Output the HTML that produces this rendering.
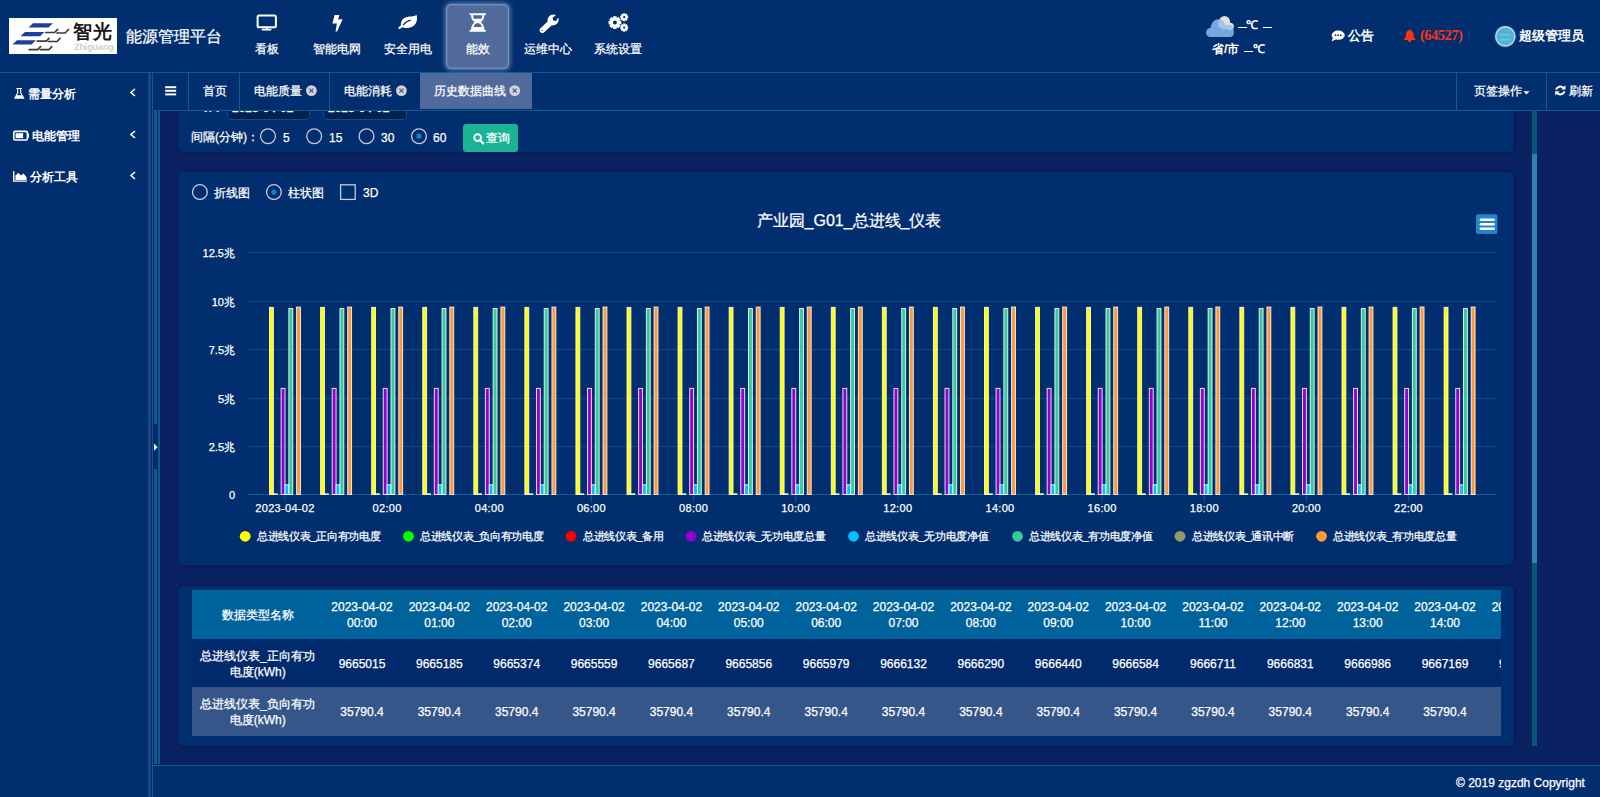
<!DOCTYPE html>
<html><head><meta charset="utf-8">
<style>
*{margin:0;padding:0;box-sizing:border-box}
html,body{width:1600px;height:797px;overflow:hidden}
body{background:#002e6e;color:#fff;font-family:"Liberation Sans",sans-serif;font-size:12px;position:relative}
.a{position:absolute}
.t{position:absolute;white-space:nowrap;line-height:1;-webkit-text-stroke:0.25px currentColor}
.t.nb{-webkit-text-stroke:0}
table{-webkit-text-stroke:0.25px #fff}
svg.s{position:absolute;left:0;top:0;overflow:visible}
</style></head><body>
<div class="a" style="left:0px;top:0px;width:1600px;height:72px;background:#002e6e;"></div>
<div class="a" style="left:0px;top:72px;width:1600px;height:1px;background:#0b5b92;"></div>
<div class="a" style="left:9px;top:18px;width:108px;height:36px;background:#fff;"></div>
<svg class="s" width="1600" height="80" style="width:1600px;height:80px">
<g fill="#1f3f9a">
<polygon points="33,23.3 53,23.3 48.5,27.6 28.5,27.6"/>
<polygon points="25,32 44.5,32 40,36.2 20.5,36.2"/>
<polygon points="17,40.3 36,40.3 31.5,44.6 12.5,44.6"/>
</g>
<g stroke="#3a3a3a" stroke-width="1.7" fill="none" stroke-linecap="round" stroke-linejoin="round">
<polyline points="45.9,32.5 54.6,32.5 57.6,29.3"/><polyline points="56.9,33 65.1,33 68.5,29.5"/>
<polyline points="37.3,41.1 46.3,41.1 49,38.3"/><polyline points="48.6,41.5 57.2,41.5 60.1,38.3"/>
<polyline points="29.2,49.6 37.7,49.6 40.5,46.6"/><polyline points="40.3,49.6 49,49.6 51.8,46.6"/>
</g>
</svg>
<div class="t nb" style="left:73px;top:22px;font-size:19px;font-weight:bold;color:#1a1a1a;letter-spacing:1px">智光</div>
<div class="t nb" style="left:74px;top:42.5px;font-size:9px;font-weight:bold;color:#cfcfcf;letter-spacing:-0.1px">Zhiguang</div>
<div class="t" style="left:126px;top:29px;font-size:16px">能源管理平台</div>
<div class="a" style="left:446px;top:4px;width:63px;height:65px;background:#4f6a9b;border-radius:5px;box-shadow:0 0 5px 1px rgba(190,205,235,.55),inset 0 0 2px 1px rgba(200,215,240,.45)"></div>
<div class="t" style="left:255px;top:43px;font-size:12px">看板</div>
<div class="t" style="left:313px;top:43px;font-size:12px">智能电网</div>
<div class="t" style="left:384px;top:43px;font-size:12px">安全用电</div>
<div class="t" style="left:466px;top:43px;font-size:12px">能效</div>
<div class="t" style="left:524px;top:43px;font-size:12px">运维中心</div>
<div class="t" style="left:594px;top:43px;font-size:12px">系统设置</div>
<svg class="s" width="1600" height="80" style="width:1600px;height:80px">
<rect x="257.6" y="15.4" width="18.3" height="11.9" rx="1.6" ry="1.6" fill="none" stroke="#fff" stroke-width="2"/>
<rect x="266" y="27.5" width="2" height="2" fill="#fff"/>
<rect x="261.6" y="28.8" width="10" height="1.6" rx="0.8" fill="#fff"/>
<polygon fill="#fff" points="334.6,15.1 339.4,15.1 338.1,19.4 342.6,19.3 337.1,31.6 335.5,31.6 336.9,23.6 332.4,23.6"/>
<path fill="#fff" d="M416.6,15 C417.8,19 417,24.5 411.5,27 C408,28.6 404.5,28 402.5,27.2 L400,28.8 C399,29.2 397.8,28.4 398.4,27.6 L401,25.2 C400.5,22 402,18.6 405.5,17.4 C409,16.2 414,16.8 416.6,15 Z"/>
<path fill="none" stroke="#002e6e" stroke-width="1.1" d="M403,25.2 C405,22.5 408,20.8 411,20"/>
<g fill="#fff">
<path fill-rule="evenodd" d="M469.5,13.2 H485.9 V15.1 H484.4 C484.4,18.5 483,20.6 480.9,22.35 C483,24.1 484.4,26.5 484.4,30 H485.9 V31.8 H469.5 V30 H471 C471,26.5 472.4,24.1 474.5,22.35 C472.4,20.6 471,18.5 471,15.1 H469.5 Z M472.9,15.3 H482.4 L481.7,18.7 H473.7 Z M477.7,23.1 C475.5,23.4 473.9,25 473.5,26.9 H482 C481.5,25 479.9,23.4 477.7,23.1 Z"/>
</g>
<path fill="#fff" d="M540.2,28.4 L547.6,21.4 C547,18 549.6,14.4 553.6,14.4 C554.6,14.4 555.4,14.6 556,15 L552.6,17.8 L553.2,20.4 L555.8,21 L558.2,17.8 C558.6,18.6 558.8,19.4 558.6,20.6 C558.2,23.8 555,26 551.6,25.4 L544.2,32.2 C543,33.4 541.4,33.2 540.4,32.2 C539.4,31.2 539.2,29.6 540.2,28.4 Z"/>
<circle cx="542" cy="30.4" r="0.7" fill="#002e6e"/>
<path fill="#fff" fill-rule="evenodd" d="M619.52,20.69 L619.59,20.87 L621.25,20.81 L621.25,24.39 L619.59,24.33 L619.52,24.51 L619.44,24.69 L620.66,25.82 L618.12,28.36 L616.99,27.14 L616.81,27.22 L616.63,27.29 L616.69,28.95 L613.11,28.95 L613.17,27.29 L612.99,27.22 L612.81,27.14 L611.68,28.36 L609.14,25.82 L610.36,24.69 L610.28,24.51 L610.21,24.33 L608.55,24.39 L608.55,20.81 L610.21,20.87 L610.28,20.69 L610.36,20.51 L609.14,19.38 L611.68,16.84 L612.81,18.06 L612.99,17.98 L613.17,17.91 L613.11,16.25 L616.69,16.25 L616.63,17.91 L616.81,17.98 L616.99,18.06 L618.12,16.84 L620.66,19.38 L619.44,20.51 Z M616.90,22.60 A2.0,2.0 0 1,0 612.90,22.60 A2.0,2.0 0 1,0 616.90,22.60 Z"/><path fill="#fff" fill-rule="evenodd" d="M627.06,16.01 L627.11,16.13 L628.24,16.06 L628.24,18.34 L627.11,18.27 L627.06,18.39 L627.02,18.50 L627.86,19.25 L626.25,20.86 L625.50,20.02 L625.39,20.06 L625.27,20.11 L625.34,21.24 L623.06,21.24 L623.13,20.11 L623.01,20.06 L622.90,20.02 L622.15,20.86 L620.54,19.25 L621.38,18.50 L621.34,18.39 L621.29,18.27 L620.16,18.34 L620.16,16.06 L621.29,16.13 L621.34,16.01 L621.38,15.90 L620.54,15.15 L622.15,13.54 L622.90,14.38 L623.01,14.34 L623.13,14.29 L623.06,13.16 L625.34,13.16 L625.27,14.29 L625.39,14.34 L625.50,14.38 L626.25,13.54 L627.86,15.15 L627.02,15.90 Z M625.30,17.20 A1.1,1.1 0 1,0 623.10,17.20 A1.1,1.1 0 1,0 625.30,17.20 Z"/><path fill="#fff" fill-rule="evenodd" d="M627.06,26.41 L627.11,26.53 L628.24,26.46 L628.24,28.74 L627.11,28.67 L627.06,28.79 L627.02,28.90 L627.86,29.65 L626.25,31.26 L625.50,30.42 L625.39,30.46 L625.27,30.51 L625.34,31.64 L623.06,31.64 L623.13,30.51 L623.01,30.46 L622.90,30.42 L622.15,31.26 L620.54,29.65 L621.38,28.90 L621.34,28.79 L621.29,28.67 L620.16,28.74 L620.16,26.46 L621.29,26.53 L621.34,26.41 L621.38,26.30 L620.54,25.55 L622.15,23.94 L622.90,24.78 L623.01,24.74 L623.13,24.69 L623.06,23.56 L625.34,23.56 L625.27,24.69 L625.39,24.74 L625.50,24.78 L626.25,23.94 L627.86,25.55 L627.02,26.30 Z M625.30,27.60 A1.1,1.1 0 1,0 623.10,27.60 A1.1,1.1 0 1,0 625.30,27.60 Z"/>
</svg>
<svg class="s" width="1600" height="80" style="width:1600px;height:80px">
<defs>
<clipPath id="cfront"><path d="M1210.5,36.9 C1207.8,36.9 1206,34.8 1206,32.4 C1206,29.8 1208,27.9 1210.6,27.9 C1211.2,23 1214.2,19.2 1218,19.2 C1221.8,19.2 1224.4,22 1225,25.2 L1229.8,25.4 C1232.2,25.6 1233.8,27.8 1233.8,31.2 L1233.8,33.2 C1233.8,35.4 1232.2,36.9 1230,36.9 Z"/></clipPath>
</defs>
<g fill="#e0e0e0"><circle cx="1224.5" cy="21.6" r="5.6"/><circle cx="1230.2" cy="26.4" r="3.6"/><rect x="1224.5" y="22.8" width="5.7" height="7"/></g>
<path fill="#76a6dc" d="M1210.5,36.9 C1207.8,36.9 1206,34.8 1206,32.4 C1206,29.8 1208,27.9 1210.6,27.9 C1211.2,23 1214.2,19.2 1218,19.2 C1221.8,19.2 1224.4,22 1225,25.2 L1229.8,25.4 C1232.2,25.6 1233.8,27.8 1233.8,31.2 L1233.8,33.2 C1233.8,35.4 1232.2,36.9 1230,36.9 Z"/>
<g clip-path="url(#cfront)" fill="#9dc6ee"><circle cx="1223.4" cy="23.6" r="5.6"/><circle cx="1230.2" cy="26.4" r="3.6"/><rect x="1224" y="24" width="6.2" height="5.2"/></g>
</svg>
<div class="t nb" style="left:1246px;top:19px;font-size:12px;font-weight:bold">℃</div>
<div class="t nb" style="left:1212px;top:43px;font-size:12px;font-weight:bold">省/市</div>
<div class="t nb" style="left:1252.5px;top:43px;font-size:12px;font-weight:bold">℃</div>
<div class="a" style="left:1238.2px;top:26.8px;width:8.6px;height:1.4px;background:#fff;"></div>
<div class="a" style="left:1262.7px;top:26.8px;width:9px;height:1.4px;background:#fff;"></div>
<div class="a" style="left:1244px;top:50.6px;width:9px;height:1.4px;background:#fff;"></div>
<svg class="s" width="1600" height="80" style="width:1600px;height:80px">
<ellipse cx="1338.2" cy="35.2" rx="6.5" ry="4.6" fill="#fff"/>
<polygon points="1333,37.5 1331.5,41.5 1337,38.8" fill="#fff"/>
<circle cx="1335.5" cy="35.2" r="0.9" fill="#002e6e"/><circle cx="1338.2" cy="35.2" r="0.9" fill="#002e6e"/><circle cx="1340.9" cy="35.2" r="0.9" fill="#002e6e"/>
<path fill="#ff3311" d="M1409.7,28.8 L1410.5,30.2 C1412.6,30.8 1413.5,32.6 1413.5,34.6 C1413.5,37.4 1414.6,39 1416,40.1 L1403.4,40.1 C1404.8,39 1405.9,37.4 1405.9,34.6 C1405.9,32.6 1406.8,30.8 1408.9,30.2 Z"/>
<path fill="#ff3311" d="M1408,40 L1411.4,40 C1411.4,41.2 1410.6,41.9 1409.7,41.9 C1408.8,41.9 1408,41.2 1408,40 Z"/>
<circle cx="1505.3" cy="36.4" r="11.4" fill="#104c9c" opacity="0.8"/>
<circle cx="1505.3" cy="36.4" r="8.9" fill="#4bb5d6"/>
<circle cx="1505.3" cy="36.4" r="9.5" fill="none" stroke="#c8d2de" stroke-width="1.6"/>
<rect x="1500" y="34" width="10.6" height="1.8" fill="#8fd0e4" opacity="0.55"/>
<rect x="1500" y="38.8" width="10.6" height="1.8" fill="#8fd0e4" opacity="0.55"/>
</svg>
<div class="t nb" style="left:1348px;top:29px;font-size:13px;font-weight:bold">公告</div>
<div class="t nb" style="left:1420px;top:28px;font-size:14.5px;font-weight:bold;color:#ff3311;font-family:Liberation Serif,serif;letter-spacing:-0.5px">(64527)</div>
<div class="t nb" style="left:1519px;top:29px;font-size:13px;font-weight:bold">超级管理员</div>
<div class="a" style="left:148px;top:73px;width:3px;height:724px;background:#1b4584;"></div>
<div class="a" style="left:152px;top:73px;width:1px;height:724px;background:#0b5b92;"></div>
<div class="t nb" style="left:28px;top:88px;font-size:12px;font-weight:bold">需量分析</div>
<div class="t nb" style="left:32px;top:130px;font-size:12px;font-weight:bold">电能管理</div>
<div class="t nb" style="left:30px;top:171px;font-size:12px;font-weight:bold">分析工具</div>
<svg class="s" width="200" height="200" style="width:200px;height:200px">
<path fill="#fff" d="M16.4,88 L22,88 L22,89 L21.2,89 L21.2,92.6 L24.6,98.8 L14,98.8 L17.2,92.6 L17.2,89 L16.4,89 Z"/>
<path fill="#002e6e" d="M18.3,89 L20.1,89 L20.1,92.9 L21.4,95.2 L17,95.2 L18.3,92.9 Z"/>
<rect x="13.8" y="131.4" width="13.6" height="8.6" rx="1.5" fill="none" stroke="#fff" stroke-width="1.6"/>
<rect x="27.4" y="133.6" width="1.6" height="4.2" fill="#fff"/>
<rect x="15.6" y="133.2" width="7.5" height="5" fill="#fff"/>
<path fill="#fff" d="M13,171.2 L14.4,171.2 L14.4,180.4 L27,180.4 L27,181.8 L13,181.8 Z"/>
<path fill="#fff" d="M15.4,180 L15.4,175.5 L18.5,172.8 L21,175.5 L23.5,173.6 L26.6,177.2 L26.6,180 Z"/>
<g fill="none" stroke="#fff" stroke-width="1.6"><polyline points="135,89 131,92.5 135,96"/><polyline points="135,131 131,134.5 135,138"/><polyline points="135,172 131,175.5 135,179"/></g>
</svg>
<div class="a" style="left:153px;top:110px;width:1447px;height:1px;background:#0b5b92;"></div>
<div class="a" style="left:188px;top:73px;width:1px;height:37px;background:#0b5b92;"></div>
<div class="a" style="left:239px;top:73px;width:1px;height:37px;background:#0b5b92;"></div>
<div class="a" style="left:329px;top:73px;width:1px;height:37px;background:#0b5b92;"></div>
<div class="a" style="left:1456px;top:73px;width:1px;height:37px;background:#0b5b92;"></div>
<div class="a" style="left:1546px;top:73px;width:1px;height:37px;background:#0b5b92;"></div>
<div class="a" style="left:420px;top:73px;width:112px;height:36px;background:#4f6a9b;"></div>
<div class="t" style="left:203px;top:85px;font-size:12px">首页</div>
<div class="t" style="left:254px;top:85px;font-size:12px">电能质量</div>
<div class="t" style="left:344px;top:85px;font-size:12px">电能消耗</div>
<div class="t" style="left:434px;top:85px;font-size:12px">历史数据曲线</div>
<div class="t" style="left:1474px;top:85px;font-size:12px">页签操作</div>
<div class="t" style="left:1569px;top:85px;font-size:12px">刷新</div>
<svg class="s" width="1600" height="120" style="width:1600px;height:120px">
<rect x="165.2" y="86.2" width="11" height="2" fill="#fff"/>
<rect x="165.2" y="89.8" width="11" height="2" fill="#fff"/>
<rect x="165.2" y="93.4" width="11" height="2" fill="#fff"/>
<circle cx="311.4" cy="90.6" r="5.4" fill="#d2d4da"/><g stroke="#4a5a7a" stroke-width="1.3"><line x1="309.4" y1="88.6" x2="313.4" y2="92.6"/><line x1="313.4" y1="88.6" x2="309.4" y2="92.6"/></g><circle cx="401.4" cy="90.6" r="5.4" fill="#d2d4da"/><g stroke="#4a5a7a" stroke-width="1.3"><line x1="399.4" y1="88.6" x2="403.4" y2="92.6"/><line x1="403.4" y1="88.6" x2="399.4" y2="92.6"/></g><circle cx="514.7" cy="90.6" r="5.4" fill="#d2d4da"/><g stroke="#4a5a7a" stroke-width="1.3"><line x1="512.7" y1="88.6" x2="516.7" y2="92.6"/><line x1="516.7" y1="88.6" x2="512.7" y2="92.6"/></g>
<polygon points="1523.5,91.2 1529.5,91.2 1526.5,94.5" fill="#fff"/>
<path fill="none" stroke="#fff" stroke-width="2" d="M1563.6,88 A4.6,4.6 0 0 0 1556,89.6 M1557,93 A4.6,4.6 0 0 0 1564.6,91.4"/>
<polygon fill="#fff" points="1565.5,85.2 1565.5,89.6 1561.2,89.6"/>
<polygon fill="#fff" points="1555.2,95.6 1555.2,91.2 1559.5,91.2"/>
</svg>
<div class="a" style="left:153px;top:111px;width:1447px;height:654px;background:#0a2162;"></div>
<div class="a" style="left:154px;top:111px;width:3.4px;height:313px;background:#0a5a93;"></div>
<div class="a" style="left:154px;top:424px;width:3.4px;height:45px;background:#012c6c;"></div>
<div class="a" style="left:154px;top:469px;width:3.4px;height:295px;background:#0a5a93;"></div>
<div class="a" style="left:158px;top:111px;width:2px;height:653px;background:#0a5a93;"></div>
<svg class="s" width="200" height="797" style="width:200px;height:797px"><polygon points="154,443.6 154,450.8 157.6,447.2" fill="#fff"/></svg>
<div class="a" style="left:1532px;top:111px;width:5px;height:635px;background:#0a5478;"></div>
<div class="a" style="left:1532px;top:154px;width:5px;height:409px;background:#3381b3;"></div>
<div class="a" style="left:153px;top:111px;width:1380px;height:45px;overflow:hidden">
<div class="a" style="left:25px;top:-40px;width:1336px;height:81px;background:#002e6e;border-radius:5px;box-shadow:0 0 3px rgba(0,0,20,.35)">
<div class="a" style="left:49px;top:0px;width:83px;height:49px;background:#03214f;border:1px solid #0d4d8a;border-radius:4px"></div>
<div class="a" style="left:145px;top:0px;width:84px;height:49px;background:#03214f;border:1px solid #0d4d8a;border-radius:4px"></div>
<div class="t" style="left:54px;top:31px;font-size:12px;font-weight:bold">2023-04-02</div>
<div class="t" style="left:150px;top:31px;font-size:12px;font-weight:bold">2023-04-02</div>
<div class="t" style="left:20px;top:30px;font-size:11px;font-weight:bold">时间:</div>
</div></div>
<div class="t" style="left:191px;top:131px;font-size:12px">间隔(分钟)：</div>
<div class="t" style="left:283px;top:132px;font-size:12px">5</div>
<div class="t" style="left:329px;top:132px;font-size:12px">15</div>
<div class="t" style="left:381px;top:132px;font-size:12px">30</div>
<div class="t" style="left:433px;top:132px;font-size:12px">60</div>
<div class="a" style="left:463px;top:124px;width:55px;height:28px;background:#1ab394;border-radius:3px"></div>
<svg class="s" width="600" height="220" style="width:600px;height:220px">
<circle cx="477.6" cy="137.6" r="3.4" fill="none" stroke="#fff" stroke-width="1.9"/>
<line x1="480" y1="140" x2="483.2" y2="143.4" stroke="#fff" stroke-width="2.2" stroke-linecap="round"/>
</svg>
<div class="t" style="left:486px;top:132px;font-size:12px">查询</div>
<div class="a" style="left:178px;top:172px;width:1336px;height:393px;background:#002e6e;border-radius:5px;box-shadow:0 0 3px rgba(0,0,20,.35)"></div>
<svg class="s" width="600" height="220" style="width:600px;height:220px">
<g fill="none" stroke="#c8ccd6" stroke-width="1.3">
<circle cx="268" cy="136.2" r="7.4"/><circle cx="314.2" cy="136.2" r="7.4"/><circle cx="366.5" cy="136.2" r="7.4"/><circle cx="419" cy="136.2" r="7.4"/>
<circle cx="199.9" cy="192.1" r="7.4"/><circle cx="273.9" cy="192.1" r="7.4"/>
<rect x="340.6" y="184.8" width="14.6" height="14.6"/>
</g>
<circle cx="419" cy="136.2" r="2.6" fill="#1a7fbf"/>
<circle cx="273.9" cy="192.1" r="2.6" fill="#1a7fbf"/>
</svg>
<div class="t" style="left:214px;top:187px;font-size:12px">折线图</div>
<div class="t" style="left:288px;top:187px;font-size:12px">柱状图</div>
<div class="t" style="left:363px;top:187px;font-size:12px">3D</div>
<svg class="s" width="1600" height="600" style="width:1600px;height:600px">
<rect x="248" y="252" width="1249" height="1" fill="#0c4a86"/>
<rect x="248" y="301" width="1249" height="1" fill="#0c4a86"/>
<rect x="248" y="349" width="1249" height="1" fill="#0c4a86"/>
<rect x="248" y="398" width="1249" height="1" fill="#0c4a86"/>
<rect x="248" y="446" width="1249" height="1" fill="#0c4a86"/>
<rect x="248" y="494" width="1249" height="1" fill="#0e5a8c"/>
<rect x="284.50" y="495" width="1" height="7" fill="#0e5a8c"/>
<rect x="386.64" y="495" width="1" height="7" fill="#0e5a8c"/>
<rect x="488.78" y="495" width="1" height="7" fill="#0e5a8c"/>
<rect x="590.92" y="495" width="1" height="7" fill="#0e5a8c"/>
<rect x="693.06" y="495" width="1" height="7" fill="#0e5a8c"/>
<rect x="795.20" y="495" width="1" height="7" fill="#0e5a8c"/>
<rect x="897.34" y="495" width="1" height="7" fill="#0e5a8c"/>
<rect x="999.48" y="495" width="1" height="7" fill="#0e5a8c"/>
<rect x="1101.62" y="495" width="1" height="7" fill="#0e5a8c"/>
<rect x="1203.76" y="495" width="1" height="7" fill="#0e5a8c"/>
<rect x="1305.90" y="495" width="1" height="7" fill="#0e5a8c"/>
<rect x="1408.04" y="495" width="1" height="7" fill="#0e5a8c"/>
<rect x="269.52" y="307.39" width="3.87" height="187.11" fill="#ffff00" stroke="rgba(255,255,255,0.85)" stroke-width="1"/>
<rect x="273.39" y="493.81" width="3.87" height="0.69" fill="#00ff00" stroke="rgba(255,255,255,0.85)" stroke-width="1"/>
<rect x="281.13" y="388.41" width="3.87" height="106.09" fill="#9400d3" stroke="rgba(255,255,255,0.85)" stroke-width="1"/>
<rect x="285.00" y="484.82" width="3.87" height="9.68" fill="#00bfff" stroke="rgba(255,255,255,0.85)" stroke-width="1"/>
<rect x="288.87" y="308.51" width="3.87" height="185.99" fill="#33cc99" stroke="rgba(255,255,255,0.85)" stroke-width="1"/>
<rect x="296.61" y="307.10" width="3.87" height="187.40" fill="#ff9933" stroke="rgba(255,255,255,0.85)" stroke-width="1"/>
<rect x="320.59" y="307.38" width="3.87" height="187.12" fill="#ffff00" stroke="rgba(255,255,255,0.85)" stroke-width="1"/>
<rect x="324.46" y="493.81" width="3.87" height="0.69" fill="#00ff00" stroke="rgba(255,255,255,0.85)" stroke-width="1"/>
<rect x="332.20" y="388.41" width="3.87" height="106.09" fill="#9400d3" stroke="rgba(255,255,255,0.85)" stroke-width="1"/>
<rect x="336.07" y="484.82" width="3.87" height="9.68" fill="#00bfff" stroke="rgba(255,255,255,0.85)" stroke-width="1"/>
<rect x="339.94" y="308.51" width="3.87" height="185.99" fill="#33cc99" stroke="rgba(255,255,255,0.85)" stroke-width="1"/>
<rect x="347.68" y="307.09" width="3.87" height="187.41" fill="#ff9933" stroke="rgba(255,255,255,0.85)" stroke-width="1"/>
<rect x="371.66" y="307.38" width="3.87" height="187.12" fill="#ffff00" stroke="rgba(255,255,255,0.85)" stroke-width="1"/>
<rect x="375.53" y="493.81" width="3.87" height="0.69" fill="#00ff00" stroke="rgba(255,255,255,0.85)" stroke-width="1"/>
<rect x="383.27" y="388.41" width="3.87" height="106.09" fill="#9400d3" stroke="rgba(255,255,255,0.85)" stroke-width="1"/>
<rect x="387.14" y="484.82" width="3.87" height="9.68" fill="#00bfff" stroke="rgba(255,255,255,0.85)" stroke-width="1"/>
<rect x="391.01" y="308.50" width="3.87" height="186.00" fill="#33cc99" stroke="rgba(255,255,255,0.85)" stroke-width="1"/>
<rect x="398.75" y="307.09" width="3.87" height="187.41" fill="#ff9933" stroke="rgba(255,255,255,0.85)" stroke-width="1"/>
<rect x="422.73" y="307.37" width="3.87" height="187.13" fill="#ffff00" stroke="rgba(255,255,255,0.85)" stroke-width="1"/>
<rect x="426.60" y="493.81" width="3.87" height="0.69" fill="#00ff00" stroke="rgba(255,255,255,0.85)" stroke-width="1"/>
<rect x="434.34" y="388.41" width="3.87" height="106.09" fill="#9400d3" stroke="rgba(255,255,255,0.85)" stroke-width="1"/>
<rect x="438.21" y="484.82" width="3.87" height="9.68" fill="#00bfff" stroke="rgba(255,255,255,0.85)" stroke-width="1"/>
<rect x="442.08" y="308.50" width="3.87" height="186.00" fill="#33cc99" stroke="rgba(255,255,255,0.85)" stroke-width="1"/>
<rect x="449.82" y="307.08" width="3.87" height="187.42" fill="#ff9933" stroke="rgba(255,255,255,0.85)" stroke-width="1"/>
<rect x="473.80" y="307.37" width="3.87" height="187.13" fill="#ffff00" stroke="rgba(255,255,255,0.85)" stroke-width="1"/>
<rect x="477.67" y="493.81" width="3.87" height="0.69" fill="#00ff00" stroke="rgba(255,255,255,0.85)" stroke-width="1"/>
<rect x="485.41" y="388.41" width="3.87" height="106.09" fill="#9400d3" stroke="rgba(255,255,255,0.85)" stroke-width="1"/>
<rect x="489.28" y="484.82" width="3.87" height="9.68" fill="#00bfff" stroke="rgba(255,255,255,0.85)" stroke-width="1"/>
<rect x="493.15" y="308.50" width="3.87" height="186.00" fill="#33cc99" stroke="rgba(255,255,255,0.85)" stroke-width="1"/>
<rect x="500.89" y="307.08" width="3.87" height="187.42" fill="#ff9933" stroke="rgba(255,255,255,0.85)" stroke-width="1"/>
<rect x="524.87" y="307.37" width="3.87" height="187.13" fill="#ffff00" stroke="rgba(255,255,255,0.85)" stroke-width="1"/>
<rect x="528.74" y="493.81" width="3.87" height="0.69" fill="#00ff00" stroke="rgba(255,255,255,0.85)" stroke-width="1"/>
<rect x="536.48" y="388.41" width="3.87" height="106.09" fill="#9400d3" stroke="rgba(255,255,255,0.85)" stroke-width="1"/>
<rect x="540.35" y="484.82" width="3.87" height="9.68" fill="#00bfff" stroke="rgba(255,255,255,0.85)" stroke-width="1"/>
<rect x="544.22" y="308.49" width="3.87" height="186.01" fill="#33cc99" stroke="rgba(255,255,255,0.85)" stroke-width="1"/>
<rect x="551.96" y="307.08" width="3.87" height="187.42" fill="#ff9933" stroke="rgba(255,255,255,0.85)" stroke-width="1"/>
<rect x="575.94" y="307.37" width="3.87" height="187.13" fill="#ffff00" stroke="rgba(255,255,255,0.85)" stroke-width="1"/>
<rect x="579.81" y="493.81" width="3.87" height="0.69" fill="#00ff00" stroke="rgba(255,255,255,0.85)" stroke-width="1"/>
<rect x="587.55" y="388.41" width="3.87" height="106.09" fill="#9400d3" stroke="rgba(255,255,255,0.85)" stroke-width="1"/>
<rect x="591.42" y="484.82" width="3.87" height="9.68" fill="#00bfff" stroke="rgba(255,255,255,0.85)" stroke-width="1"/>
<rect x="595.29" y="308.49" width="3.87" height="186.01" fill="#33cc99" stroke="rgba(255,255,255,0.85)" stroke-width="1"/>
<rect x="603.03" y="307.08" width="3.87" height="187.42" fill="#ff9933" stroke="rgba(255,255,255,0.85)" stroke-width="1"/>
<rect x="627.01" y="307.36" width="3.87" height="187.14" fill="#ffff00" stroke="rgba(255,255,255,0.85)" stroke-width="1"/>
<rect x="630.88" y="493.81" width="3.87" height="0.69" fill="#00ff00" stroke="rgba(255,255,255,0.85)" stroke-width="1"/>
<rect x="638.62" y="388.41" width="3.87" height="106.09" fill="#9400d3" stroke="rgba(255,255,255,0.85)" stroke-width="1"/>
<rect x="642.49" y="484.82" width="3.87" height="9.68" fill="#00bfff" stroke="rgba(255,255,255,0.85)" stroke-width="1"/>
<rect x="646.36" y="308.49" width="3.87" height="186.01" fill="#33cc99" stroke="rgba(255,255,255,0.85)" stroke-width="1"/>
<rect x="654.10" y="307.07" width="3.87" height="187.43" fill="#ff9933" stroke="rgba(255,255,255,0.85)" stroke-width="1"/>
<rect x="678.08" y="307.36" width="3.87" height="187.14" fill="#ffff00" stroke="rgba(255,255,255,0.85)" stroke-width="1"/>
<rect x="681.95" y="493.81" width="3.87" height="0.69" fill="#00ff00" stroke="rgba(255,255,255,0.85)" stroke-width="1"/>
<rect x="689.69" y="388.41" width="3.87" height="106.09" fill="#9400d3" stroke="rgba(255,255,255,0.85)" stroke-width="1"/>
<rect x="693.56" y="484.82" width="3.87" height="9.68" fill="#00bfff" stroke="rgba(255,255,255,0.85)" stroke-width="1"/>
<rect x="697.43" y="308.48" width="3.87" height="186.02" fill="#33cc99" stroke="rgba(255,255,255,0.85)" stroke-width="1"/>
<rect x="705.17" y="307.07" width="3.87" height="187.43" fill="#ff9933" stroke="rgba(255,255,255,0.85)" stroke-width="1"/>
<rect x="729.15" y="307.36" width="3.87" height="187.14" fill="#ffff00" stroke="rgba(255,255,255,0.85)" stroke-width="1"/>
<rect x="733.02" y="493.81" width="3.87" height="0.69" fill="#00ff00" stroke="rgba(255,255,255,0.85)" stroke-width="1"/>
<rect x="740.76" y="388.41" width="3.87" height="106.09" fill="#9400d3" stroke="rgba(255,255,255,0.85)" stroke-width="1"/>
<rect x="744.63" y="484.82" width="3.87" height="9.68" fill="#00bfff" stroke="rgba(255,255,255,0.85)" stroke-width="1"/>
<rect x="748.50" y="308.48" width="3.87" height="186.02" fill="#33cc99" stroke="rgba(255,255,255,0.85)" stroke-width="1"/>
<rect x="756.24" y="307.07" width="3.87" height="187.43" fill="#ff9933" stroke="rgba(255,255,255,0.85)" stroke-width="1"/>
<rect x="780.22" y="307.35" width="3.87" height="187.15" fill="#ffff00" stroke="rgba(255,255,255,0.85)" stroke-width="1"/>
<rect x="784.09" y="493.81" width="3.87" height="0.69" fill="#00ff00" stroke="rgba(255,255,255,0.85)" stroke-width="1"/>
<rect x="791.83" y="388.41" width="3.87" height="106.09" fill="#9400d3" stroke="rgba(255,255,255,0.85)" stroke-width="1"/>
<rect x="795.70" y="484.82" width="3.87" height="9.68" fill="#00bfff" stroke="rgba(255,255,255,0.85)" stroke-width="1"/>
<rect x="799.57" y="308.48" width="3.87" height="186.02" fill="#33cc99" stroke="rgba(255,255,255,0.85)" stroke-width="1"/>
<rect x="807.31" y="307.06" width="3.87" height="187.44" fill="#ff9933" stroke="rgba(255,255,255,0.85)" stroke-width="1"/>
<rect x="831.29" y="307.35" width="3.87" height="187.15" fill="#ffff00" stroke="rgba(255,255,255,0.85)" stroke-width="1"/>
<rect x="835.16" y="493.81" width="3.87" height="0.69" fill="#00ff00" stroke="rgba(255,255,255,0.85)" stroke-width="1"/>
<rect x="842.90" y="388.41" width="3.87" height="106.09" fill="#9400d3" stroke="rgba(255,255,255,0.85)" stroke-width="1"/>
<rect x="846.77" y="484.82" width="3.87" height="9.68" fill="#00bfff" stroke="rgba(255,255,255,0.85)" stroke-width="1"/>
<rect x="850.64" y="308.48" width="3.87" height="186.02" fill="#33cc99" stroke="rgba(255,255,255,0.85)" stroke-width="1"/>
<rect x="858.38" y="307.06" width="3.87" height="187.44" fill="#ff9933" stroke="rgba(255,255,255,0.85)" stroke-width="1"/>
<rect x="882.36" y="307.35" width="3.87" height="187.15" fill="#ffff00" stroke="rgba(255,255,255,0.85)" stroke-width="1"/>
<rect x="886.23" y="493.81" width="3.87" height="0.69" fill="#00ff00" stroke="rgba(255,255,255,0.85)" stroke-width="1"/>
<rect x="893.97" y="388.41" width="3.87" height="106.09" fill="#9400d3" stroke="rgba(255,255,255,0.85)" stroke-width="1"/>
<rect x="897.84" y="484.82" width="3.87" height="9.68" fill="#00bfff" stroke="rgba(255,255,255,0.85)" stroke-width="1"/>
<rect x="901.71" y="308.47" width="3.87" height="186.03" fill="#33cc99" stroke="rgba(255,255,255,0.85)" stroke-width="1"/>
<rect x="909.45" y="307.06" width="3.87" height="187.44" fill="#ff9933" stroke="rgba(255,255,255,0.85)" stroke-width="1"/>
<rect x="933.43" y="307.35" width="3.87" height="187.15" fill="#ffff00" stroke="rgba(255,255,255,0.85)" stroke-width="1"/>
<rect x="937.30" y="493.81" width="3.87" height="0.69" fill="#00ff00" stroke="rgba(255,255,255,0.85)" stroke-width="1"/>
<rect x="945.04" y="388.41" width="3.87" height="106.09" fill="#9400d3" stroke="rgba(255,255,255,0.85)" stroke-width="1"/>
<rect x="948.91" y="484.82" width="3.87" height="9.68" fill="#00bfff" stroke="rgba(255,255,255,0.85)" stroke-width="1"/>
<rect x="952.78" y="308.47" width="3.87" height="186.03" fill="#33cc99" stroke="rgba(255,255,255,0.85)" stroke-width="1"/>
<rect x="960.52" y="307.06" width="3.87" height="187.44" fill="#ff9933" stroke="rgba(255,255,255,0.85)" stroke-width="1"/>
<rect x="984.50" y="307.34" width="3.87" height="187.16" fill="#ffff00" stroke="rgba(255,255,255,0.85)" stroke-width="1"/>
<rect x="988.37" y="493.81" width="3.87" height="0.69" fill="#00ff00" stroke="rgba(255,255,255,0.85)" stroke-width="1"/>
<rect x="996.11" y="388.41" width="3.87" height="106.09" fill="#9400d3" stroke="rgba(255,255,255,0.85)" stroke-width="1"/>
<rect x="999.98" y="484.82" width="3.87" height="9.68" fill="#00bfff" stroke="rgba(255,255,255,0.85)" stroke-width="1"/>
<rect x="1003.85" y="308.47" width="3.87" height="186.03" fill="#33cc99" stroke="rgba(255,255,255,0.85)" stroke-width="1"/>
<rect x="1011.59" y="307.05" width="3.87" height="187.45" fill="#ff9933" stroke="rgba(255,255,255,0.85)" stroke-width="1"/>
<rect x="1035.57" y="307.34" width="3.87" height="187.16" fill="#ffff00" stroke="rgba(255,255,255,0.85)" stroke-width="1"/>
<rect x="1039.44" y="493.81" width="3.87" height="0.69" fill="#00ff00" stroke="rgba(255,255,255,0.85)" stroke-width="1"/>
<rect x="1047.18" y="388.41" width="3.87" height="106.09" fill="#9400d3" stroke="rgba(255,255,255,0.85)" stroke-width="1"/>
<rect x="1051.05" y="484.82" width="3.87" height="9.68" fill="#00bfff" stroke="rgba(255,255,255,0.85)" stroke-width="1"/>
<rect x="1054.92" y="308.46" width="3.87" height="186.04" fill="#33cc99" stroke="rgba(255,255,255,0.85)" stroke-width="1"/>
<rect x="1062.66" y="307.05" width="3.87" height="187.45" fill="#ff9933" stroke="rgba(255,255,255,0.85)" stroke-width="1"/>
<rect x="1086.64" y="307.34" width="3.87" height="187.16" fill="#ffff00" stroke="rgba(255,255,255,0.85)" stroke-width="1"/>
<rect x="1090.51" y="493.81" width="3.87" height="0.69" fill="#00ff00" stroke="rgba(255,255,255,0.85)" stroke-width="1"/>
<rect x="1098.25" y="388.41" width="3.87" height="106.09" fill="#9400d3" stroke="rgba(255,255,255,0.85)" stroke-width="1"/>
<rect x="1102.12" y="484.82" width="3.87" height="9.68" fill="#00bfff" stroke="rgba(255,255,255,0.85)" stroke-width="1"/>
<rect x="1105.99" y="308.46" width="3.87" height="186.04" fill="#33cc99" stroke="rgba(255,255,255,0.85)" stroke-width="1"/>
<rect x="1113.73" y="307.05" width="3.87" height="187.45" fill="#ff9933" stroke="rgba(255,255,255,0.85)" stroke-width="1"/>
<rect x="1137.71" y="307.33" width="3.87" height="187.17" fill="#ffff00" stroke="rgba(255,255,255,0.85)" stroke-width="1"/>
<rect x="1141.58" y="493.81" width="3.87" height="0.69" fill="#00ff00" stroke="rgba(255,255,255,0.85)" stroke-width="1"/>
<rect x="1149.32" y="388.41" width="3.87" height="106.09" fill="#9400d3" stroke="rgba(255,255,255,0.85)" stroke-width="1"/>
<rect x="1153.19" y="484.82" width="3.87" height="9.68" fill="#00bfff" stroke="rgba(255,255,255,0.85)" stroke-width="1"/>
<rect x="1157.06" y="308.46" width="3.87" height="186.04" fill="#33cc99" stroke="rgba(255,255,255,0.85)" stroke-width="1"/>
<rect x="1164.80" y="307.04" width="3.87" height="187.46" fill="#ff9933" stroke="rgba(255,255,255,0.85)" stroke-width="1"/>
<rect x="1188.78" y="307.33" width="3.87" height="187.17" fill="#ffff00" stroke="rgba(255,255,255,0.85)" stroke-width="1"/>
<rect x="1192.65" y="493.81" width="3.87" height="0.69" fill="#00ff00" stroke="rgba(255,255,255,0.85)" stroke-width="1"/>
<rect x="1200.39" y="388.41" width="3.87" height="106.09" fill="#9400d3" stroke="rgba(255,255,255,0.85)" stroke-width="1"/>
<rect x="1204.26" y="484.82" width="3.87" height="9.68" fill="#00bfff" stroke="rgba(255,255,255,0.85)" stroke-width="1"/>
<rect x="1208.13" y="308.45" width="3.87" height="186.05" fill="#33cc99" stroke="rgba(255,255,255,0.85)" stroke-width="1"/>
<rect x="1215.87" y="307.04" width="3.87" height="187.46" fill="#ff9933" stroke="rgba(255,255,255,0.85)" stroke-width="1"/>
<rect x="1239.85" y="307.33" width="3.87" height="187.17" fill="#ffff00" stroke="rgba(255,255,255,0.85)" stroke-width="1"/>
<rect x="1243.72" y="493.81" width="3.87" height="0.69" fill="#00ff00" stroke="rgba(255,255,255,0.85)" stroke-width="1"/>
<rect x="1251.46" y="388.41" width="3.87" height="106.09" fill="#9400d3" stroke="rgba(255,255,255,0.85)" stroke-width="1"/>
<rect x="1255.33" y="484.82" width="3.87" height="9.68" fill="#00bfff" stroke="rgba(255,255,255,0.85)" stroke-width="1"/>
<rect x="1259.20" y="308.45" width="3.87" height="186.05" fill="#33cc99" stroke="rgba(255,255,255,0.85)" stroke-width="1"/>
<rect x="1266.94" y="307.04" width="3.87" height="187.46" fill="#ff9933" stroke="rgba(255,255,255,0.85)" stroke-width="1"/>
<rect x="1290.92" y="307.33" width="3.87" height="187.17" fill="#ffff00" stroke="rgba(255,255,255,0.85)" stroke-width="1"/>
<rect x="1294.79" y="493.81" width="3.87" height="0.69" fill="#00ff00" stroke="rgba(255,255,255,0.85)" stroke-width="1"/>
<rect x="1302.53" y="388.41" width="3.87" height="106.09" fill="#9400d3" stroke="rgba(255,255,255,0.85)" stroke-width="1"/>
<rect x="1306.40" y="484.82" width="3.87" height="9.68" fill="#00bfff" stroke="rgba(255,255,255,0.85)" stroke-width="1"/>
<rect x="1310.27" y="308.45" width="3.87" height="186.05" fill="#33cc99" stroke="rgba(255,255,255,0.85)" stroke-width="1"/>
<rect x="1318.01" y="307.03" width="3.87" height="187.47" fill="#ff9933" stroke="rgba(255,255,255,0.85)" stroke-width="1"/>
<rect x="1341.99" y="307.32" width="3.87" height="187.18" fill="#ffff00" stroke="rgba(255,255,255,0.85)" stroke-width="1"/>
<rect x="1345.86" y="493.81" width="3.87" height="0.69" fill="#00ff00" stroke="rgba(255,255,255,0.85)" stroke-width="1"/>
<rect x="1353.60" y="388.41" width="3.87" height="106.09" fill="#9400d3" stroke="rgba(255,255,255,0.85)" stroke-width="1"/>
<rect x="1357.47" y="484.82" width="3.87" height="9.68" fill="#00bfff" stroke="rgba(255,255,255,0.85)" stroke-width="1"/>
<rect x="1361.34" y="308.45" width="3.87" height="186.05" fill="#33cc99" stroke="rgba(255,255,255,0.85)" stroke-width="1"/>
<rect x="1369.08" y="307.03" width="3.87" height="187.47" fill="#ff9933" stroke="rgba(255,255,255,0.85)" stroke-width="1"/>
<rect x="1393.06" y="307.32" width="3.87" height="187.18" fill="#ffff00" stroke="rgba(255,255,255,0.85)" stroke-width="1"/>
<rect x="1396.93" y="493.81" width="3.87" height="0.69" fill="#00ff00" stroke="rgba(255,255,255,0.85)" stroke-width="1"/>
<rect x="1404.67" y="388.41" width="3.87" height="106.09" fill="#9400d3" stroke="rgba(255,255,255,0.85)" stroke-width="1"/>
<rect x="1408.54" y="484.82" width="3.87" height="9.68" fill="#00bfff" stroke="rgba(255,255,255,0.85)" stroke-width="1"/>
<rect x="1412.41" y="308.44" width="3.87" height="186.06" fill="#33cc99" stroke="rgba(255,255,255,0.85)" stroke-width="1"/>
<rect x="1420.15" y="307.03" width="3.87" height="187.47" fill="#ff9933" stroke="rgba(255,255,255,0.85)" stroke-width="1"/>
<rect x="1444.13" y="307.32" width="3.87" height="187.18" fill="#ffff00" stroke="rgba(255,255,255,0.85)" stroke-width="1"/>
<rect x="1448.00" y="493.81" width="3.87" height="0.69" fill="#00ff00" stroke="rgba(255,255,255,0.85)" stroke-width="1"/>
<rect x="1455.74" y="388.41" width="3.87" height="106.09" fill="#9400d3" stroke="rgba(255,255,255,0.85)" stroke-width="1"/>
<rect x="1459.61" y="484.82" width="3.87" height="9.68" fill="#00bfff" stroke="rgba(255,255,255,0.85)" stroke-width="1"/>
<rect x="1463.48" y="308.44" width="3.87" height="186.06" fill="#33cc99" stroke="rgba(255,255,255,0.85)" stroke-width="1"/>
<rect x="1471.22" y="307.03" width="3.87" height="187.47" fill="#ff9933" stroke="rgba(255,255,255,0.85)" stroke-width="1"/>
<rect x="1476" y="214.2" width="21.4" height="19.8" rx="2" fill="#2286c8"/>
<line x1="1480.8" y1="219.7" x2="1493.7" y2="219.7" stroke="#fff" stroke-width="2.4" stroke-linecap="round"/>
<line x1="1480.8" y1="224.3" x2="1493.7" y2="224.3" stroke="#fff" stroke-width="2.4" stroke-linecap="round"/>
<line x1="1480.8" y1="228.8" x2="1493.7" y2="228.8" stroke="#fff" stroke-width="2.4" stroke-linecap="round"/>
<circle cx="245.2" cy="536.3" r="5.4" fill="#ffff00"/>
<circle cx="408.5" cy="536.3" r="5.4" fill="#00ff00"/>
<circle cx="571" cy="536.3" r="5.4" fill="#ff0000"/>
<circle cx="691" cy="536.3" r="5.4" fill="#9400d3"/>
<circle cx="853.5" cy="536.3" r="5.4" fill="#00bfff"/>
<circle cx="1017.5" cy="536.3" r="5.4" fill="#33cc99"/>
<circle cx="1180" cy="536.3" r="5.4" fill="#999966"/>
<circle cx="1321.5" cy="536.3" r="5.4" fill="#ff9933"/>
</svg>
<div class="t" style="right:1365px;top:489.5px;font-size:11px;text-align:right">0</div>
<div class="t" style="right:1365px;top:441.5px;font-size:11px;text-align:right">2.5兆</div>
<div class="t" style="right:1365px;top:393.5px;font-size:11px;text-align:right">5兆</div>
<div class="t" style="right:1365px;top:344.5px;font-size:11px;text-align:right">7.5兆</div>
<div class="t" style="right:1365px;top:296.5px;font-size:11px;text-align:right">10兆</div>
<div class="t" style="right:1365px;top:247.5px;font-size:11px;text-align:right">12.5兆</div>
<div class="t" style="left:225.0px;width:120px;top:503px;font-size:11px;text-align:center;letter-spacing:0.3px">2023-04-02</div>
<div class="t" style="left:327.1px;width:120px;top:503px;font-size:11px;text-align:center;letter-spacing:0.3px">02:00</div>
<div class="t" style="left:429.3px;width:120px;top:503px;font-size:11px;text-align:center;letter-spacing:0.3px">04:00</div>
<div class="t" style="left:531.4px;width:120px;top:503px;font-size:11px;text-align:center;letter-spacing:0.3px">06:00</div>
<div class="t" style="left:633.6px;width:120px;top:503px;font-size:11px;text-align:center;letter-spacing:0.3px">08:00</div>
<div class="t" style="left:735.7px;width:120px;top:503px;font-size:11px;text-align:center;letter-spacing:0.3px">10:00</div>
<div class="t" style="left:837.8px;width:120px;top:503px;font-size:11px;text-align:center;letter-spacing:0.3px">12:00</div>
<div class="t" style="left:940.0px;width:120px;top:503px;font-size:11px;text-align:center;letter-spacing:0.3px">14:00</div>
<div class="t" style="left:1042.1px;width:120px;top:503px;font-size:11px;text-align:center;letter-spacing:0.3px">16:00</div>
<div class="t" style="left:1144.3px;width:120px;top:503px;font-size:11px;text-align:center;letter-spacing:0.3px">18:00</div>
<div class="t" style="left:1246.4px;width:120px;top:503px;font-size:11px;text-align:center;letter-spacing:0.3px">20:00</div>
<div class="t" style="left:1348.5px;width:120px;top:503px;font-size:11px;text-align:center;letter-spacing:0.3px">22:00</div>
<div class="t" style="left:646px;width:406px;top:213px;font-size:16px;text-align:center">产业园_G01_总进线_仪表</div>
<div class="t" style="left:257px;top:531px;font-size:11px;letter-spacing:-0.3px">总进线仪表_正向有功电度</div>
<div class="t" style="left:420px;top:531px;font-size:11px;letter-spacing:-0.3px">总进线仪表_负向有功电度</div>
<div class="t" style="left:583px;top:531px;font-size:11px;letter-spacing:-0.3px">总进线仪表_备用</div>
<div class="t" style="left:702px;top:531px;font-size:11px;letter-spacing:-0.3px">总进线仪表_无功电度总量</div>
<div class="t" style="left:865px;top:531px;font-size:11px;letter-spacing:-0.3px">总进线仪表_无功电度净值</div>
<div class="t" style="left:1029px;top:531px;font-size:11px;letter-spacing:-0.3px">总进线仪表_有功电度净值</div>
<div class="t" style="left:1192px;top:531px;font-size:11px;letter-spacing:-0.3px">总进线仪表_通讯中断</div>
<div class="t" style="left:1333px;top:531px;font-size:11px;letter-spacing:-0.3px">总进线仪表_有功电度总量</div>
<div class="a" style="left:178px;top:586px;width:1336px;height:160px;background:#002e6e;border-radius:5px;box-shadow:0 0 3px rgba(0,0,20,.35)"></div>
<div class="a" style="left:192px;top:590px;width:1309px;height:146px;overflow:hidden">
<table style="position:absolute;left:0;top:0;width:1988.2px;border-collapse:collapse;table-layout:fixed;font-size:12px;color:#fff;text-align:center;line-height:16px">
<style>td{padding:2px 0 0 0;vertical-align:middle}</style>
<colgroup><col style="width:131.3px"><col style="width:77.37px"><col style="width:77.37px"><col style="width:77.37px"><col style="width:77.37px"><col style="width:77.37px"><col style="width:77.37px"><col style="width:77.37px"><col style="width:77.37px"><col style="width:77.37px"><col style="width:77.37px"><col style="width:77.37px"><col style="width:77.37px"><col style="width:77.37px"><col style="width:77.37px"><col style="width:77.37px"><col style="width:77.37px"><col style="width:77.37px"><col style="width:77.37px"><col style="width:77.37px"><col style="width:77.37px"><col style="width:77.37px"><col style="width:77.37px"><col style="width:77.37px"><col style="width:77.37px"></colgroup>
<tr style="background:#00629b;height:48.6px"><td>数据类型名称</td><td>2023-04-02<br>00:00</td><td>2023-04-02<br>01:00</td><td>2023-04-02<br>02:00</td><td>2023-04-02<br>03:00</td><td>2023-04-02<br>04:00</td><td>2023-04-02<br>05:00</td><td>2023-04-02<br>06:00</td><td>2023-04-02<br>07:00</td><td>2023-04-02<br>08:00</td><td>2023-04-02<br>09:00</td><td>2023-04-02<br>10:00</td><td>2023-04-02<br>11:00</td><td>2023-04-02<br>12:00</td><td>2023-04-02<br>13:00</td><td>2023-04-02<br>14:00</td><td>2023-04-02<br>15:00</td><td>2023-04-02<br>16:00</td><td>2023-04-02<br>17:00</td><td>2023-04-02<br>18:00</td><td>2023-04-02<br>19:00</td><td>2023-04-02<br>20:00</td><td>2023-04-02<br>21:00</td><td>2023-04-02<br>22:00</td><td>2023-04-02<br>23:00</td></tr>
<tr style="background:#002a6c;height:48.4px"><td>总进线仪表_正向有功<br>电度(kWh)</td><td>9665015</td><td>9665185</td><td>9665374</td><td>9665559</td><td>9665687</td><td>9665856</td><td>9665979</td><td>9666132</td><td>9666290</td><td>9666440</td><td>9666584</td><td>9666711</td><td>9666831</td><td>9666986</td><td>9667169</td><td>9667329</td><td>9667489</td><td>9667649</td><td>9667809</td><td>9667969</td><td>9668129</td><td>9668289</td><td>9668449</td><td>9668609</td></tr>
<tr style="background:#36568a;height:48.6px"><td>总进线仪表_负向有功<br>电度(kWh)</td><td>35790.4</td><td>35790.4</td><td>35790.4</td><td>35790.4</td><td>35790.4</td><td>35790.4</td><td>35790.4</td><td>35790.4</td><td>35790.4</td><td>35790.4</td><td>35790.4</td><td>35790.4</td><td>35790.4</td><td>35790.4</td><td>35790.4</td><td>35790.4</td><td>35790.4</td><td>35790.4</td><td>35790.4</td><td>35790.4</td><td>35790.4</td><td>35790.4</td><td>35790.4</td><td>35790.4</td></tr>
</table></div>
<div class="a" style="left:153px;top:765px;width:1447px;height:1px;background:#0b5b92;"></div>
<div class="a" style="left:153px;top:766px;width:1447px;height:31px;background:#002e6e;"></div>
<div class="t" style="left:1456px;top:777px;font-size:12px">© 2019 zgzdh Copyright</div>
</body></html>
